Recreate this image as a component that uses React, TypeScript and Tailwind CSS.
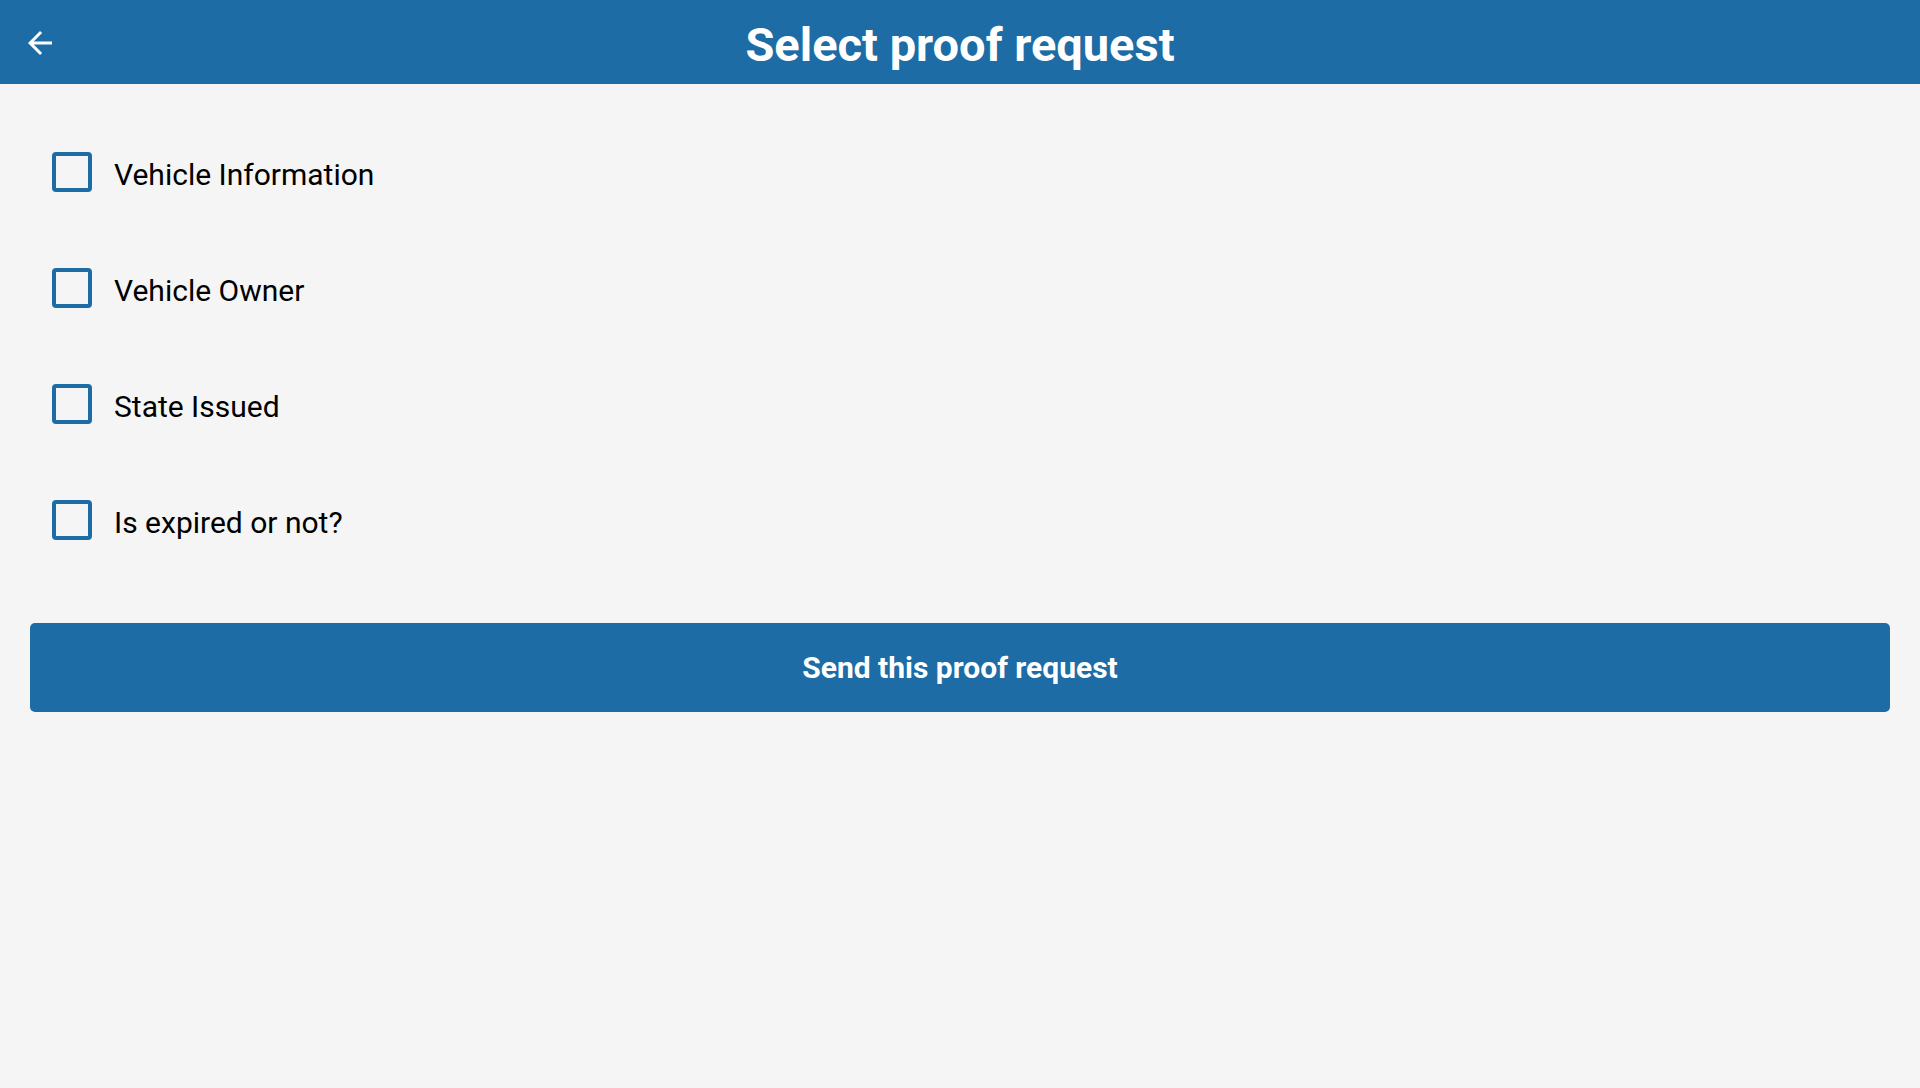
import React from "react";

const items = ["Vehicle Information", "Vehicle Owner", "State Issued", "Is expired or not?"];

export default function App() {
  return (
    <div className="w-[1920px] h-[1088px] bg-[#f5f5f5] overflow-hidden" style={{ fontFamily: "Roboto, 'Noto Sans', sans-serif" }}>
      <header className="relative h-[84px] bg-[#1d6ca5] flex items-center justify-center">
        <button className="absolute left-[22px] top-[25px] w-9 h-9 text-white">
          <svg viewBox="0 0 24 24" width="36" height="36" fill="currentColor">
            <path d="M20 11H7.83l5.59-5.59L12 4l-8 8 8 8 1.41-1.41L7.83 13H20v-2z" />
          </svg>
        </button>
        <h1 className="text-white font-bold text-[47px] leading-none mt-[4px]">Select proof request</h1>
      </header>
      <div className="pt-[68px] pl-[52px] flex flex-col gap-[76px]">
        {items.map((t) => (
          <label key={t} className="flex items-center h-10">
            <span className="w-10 h-10 border-[4px] border-[#1d6ca5] rounded-[4px] box-border" />
            <span className="ml-[22px] mt-[5px] text-[30px] text-black leading-none">{t}</span>
          </label>
        ))}
      </div>
      <div className="px-[30px] mt-[83px]">
        <button className="w-full h-[89px] bg-[#1d6ca5] rounded-[5px] text-white font-bold text-[30px] flex items-center justify-center">
          Send this proof request
        </button>
      </div>
    </div>
  );
}
